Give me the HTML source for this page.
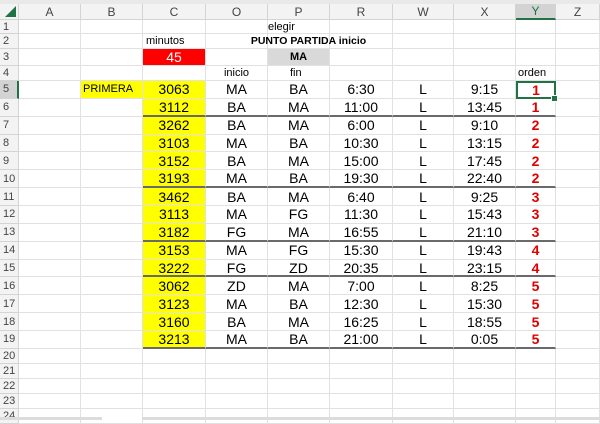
<!DOCTYPE html><html><head><style>
body{margin:0;width:600px;height:420px;overflow:hidden;background:#fff;font-family:"Liberation Sans",Arial,sans-serif;position:relative}
.g{position:absolute;left:0;top:4px;display:grid;grid-template-columns:19px 62px 62px 63px 62px 62px 63px 61px 62px 40px 44px;grid-template-rows:16px 14px 15px 17px 15px repeat(15,17.86px) 15px 15px 15px 15px 15px}
.g>div{border-right:1px solid #e1e1e1;border-bottom:1px solid #e1e1e1;box-sizing:border-box;font-size:14px;color:#000;display:flex;align-items:center;justify-content:center;white-space:nowrap;overflow:visible}
.g>div.h{background:#f3f3f3;color:#444;font-size:12px;border-color:#d4d4d4}
.g>div.rh{background:#f3f3f3;color:#444;font-size:11px;justify-content:flex-start;padding-left:3px;border-color:#d4d4d4}
.y{background:#ff0}
.t{border-bottom:2px solid #6a6a6a!important}
.r{color:#e00000!important;font-weight:bold}
.s{font-size:11px!important}
</style></head><body>
<div style="position:absolute;left:0;top:0;width:600px;height:4px;background:#e9e9e9"></div>
<div class="g">
<div class="h" style="position:relative"><span style="position:absolute;right:2px;bottom:2px;width:0;height:0;border-left:11px solid transparent;border-bottom:11px solid #217346"></span></div><div class="h">A</div><div class="h">B</div><div class="h">C</div><div class="h">O</div><div class="h">P</div><div class="h">R</div><div class="h">W</div><div class="h">X</div><div class="h" style="background:#d3d3d3;color:#217346;border-bottom:2px solid #217346">Y</div><div class="h">Z</div>
<div class="rh">1</div><div></div><div></div><div></div><div></div><div class="s" style="justify-content:flex-start;overflow:visible">elegir</div><div></div><div></div><div></div><div></div><div></div>
<div class="rh">2</div><div></div><div></div><div class="s" style="justify-content:flex-start;padding-left:3px">minutos</div><div></div><div class="s" style="font-weight:bold;font-size:10.5px!important"><span style="margin-left:20px">PUNTO PARTIDA inicio</span></div><div></div><div></div><div></div><div></div><div></div>
<div class="rh">3</div><div></div><div></div><div style="background:#f00;color:#fff">45</div><div></div><div style="background:#d9d9d9;font-weight:bold;font-size:11px">MA</div><div></div><div></div><div></div><div></div><div></div>
<div class="rh">4</div><div></div><div></div><div></div><div class="s">inicio</div><div class="s" style="justify-content:flex-start;padding-left:22px">fin</div><div></div><div></div><div></div><div class="s" style="justify-content:flex-start;padding-left:2px">orden</div><div></div>
<div class="rh" style="background:#d3d3d3;border-right:2px solid #217346">5</div><div></div><div class="y s" style="justify-content:flex-start;padding-left:2px">PRIMERA</div><div class="y">3063</div><div>MA</div><div>BA</div><div>6:30</div><div>L</div><div>9:15</div><div class="r" style="border:2px solid #217346">1</div><div></div>
<div class="rh">6</div><div></div><div></div><div class="y t">3112</div><div class="t">BA</div><div class="t">MA</div><div class="t">11:00</div><div class="t">L</div><div class="t">13:45</div><div class="r t">1</div><div></div>
<div class="rh">7</div><div></div><div></div><div class="y">3262</div><div>BA</div><div>MA</div><div>6:00</div><div>L</div><div>9:10</div><div class="r">2</div><div></div>
<div class="rh">8</div><div></div><div></div><div class="y">3103</div><div>MA</div><div>BA</div><div>10:30</div><div>L</div><div>13:15</div><div class="r">2</div><div></div>
<div class="rh">9</div><div></div><div></div><div class="y">3152</div><div>BA</div><div>MA</div><div>15:00</div><div>L</div><div>17:45</div><div class="r">2</div><div></div>
<div class="rh">10</div><div></div><div></div><div class="y t">3193</div><div class="t">MA</div><div class="t">BA</div><div class="t">19:30</div><div class="t">L</div><div class="t">22:40</div><div class="r t">2</div><div></div>
<div class="rh">11</div><div></div><div></div><div class="y">3462</div><div>BA</div><div>MA</div><div>6:40</div><div>L</div><div>9:25</div><div class="r">3</div><div></div>
<div class="rh">12</div><div></div><div></div><div class="y">3113</div><div>MA</div><div>FG</div><div>11:30</div><div>L</div><div>15:43</div><div class="r">3</div><div></div>
<div class="rh">13</div><div></div><div></div><div class="y t">3182</div><div class="t">FG</div><div class="t">MA</div><div class="t">16:55</div><div class="t">L</div><div class="t">21:10</div><div class="r t">3</div><div></div>
<div class="rh">14</div><div></div><div></div><div class="y">3153</div><div>MA</div><div>FG</div><div>15:30</div><div>L</div><div>19:43</div><div class="r">4</div><div></div>
<div class="rh">15</div><div></div><div></div><div class="y t">3222</div><div class="t">FG</div><div class="t">ZD</div><div class="t">20:35</div><div class="t">L</div><div class="t">23:15</div><div class="r t">4</div><div></div>
<div class="rh">16</div><div></div><div></div><div class="y">3062</div><div>ZD</div><div>MA</div><div>7:00</div><div>L</div><div>8:25</div><div class="r">5</div><div></div>
<div class="rh">17</div><div></div><div></div><div class="y">3123</div><div>MA</div><div>BA</div><div>12:30</div><div>L</div><div>15:30</div><div class="r">5</div><div></div>
<div class="rh">18</div><div></div><div></div><div class="y">3160</div><div>BA</div><div>MA</div><div>16:25</div><div>L</div><div>18:55</div><div class="r">5</div><div></div>
<div class="rh">19</div><div></div><div></div><div class="y t">3213</div><div class="t">MA</div><div class="t">BA</div><div class="t">21:00</div><div class="t">L</div><div class="t">0:05</div><div class="r t">5</div><div></div>
<div class="rh">20</div><div></div><div></div><div></div><div></div><div></div><div></div><div></div><div></div><div></div><div></div>
<div class="rh">21</div><div></div><div></div><div></div><div></div><div></div><div></div><div></div><div></div><div></div><div></div>
<div class="rh">22</div><div></div><div></div><div></div><div></div><div></div><div></div><div></div><div></div><div></div><div></div>
<div class="rh">23</div><div></div><div></div><div></div><div></div><div></div><div></div><div></div><div></div><div></div><div></div>
<div class="rh">24</div><div></div><div></div><div></div><div></div><div></div><div></div><div></div><div></div><div></div><div></div>
</div>
<div style="position:absolute;left:551px;top:95px;width:5px;height:5px;background:#217346;border:1px solid #fff"></div>
<div style="position:absolute;left:0;top:417px;width:600px;height:3px;background:#dcdcdc"></div>
<div style="position:absolute;left:102px;top:416px;width:40px;height:4px;background:#fff"></div>
</body></html>
